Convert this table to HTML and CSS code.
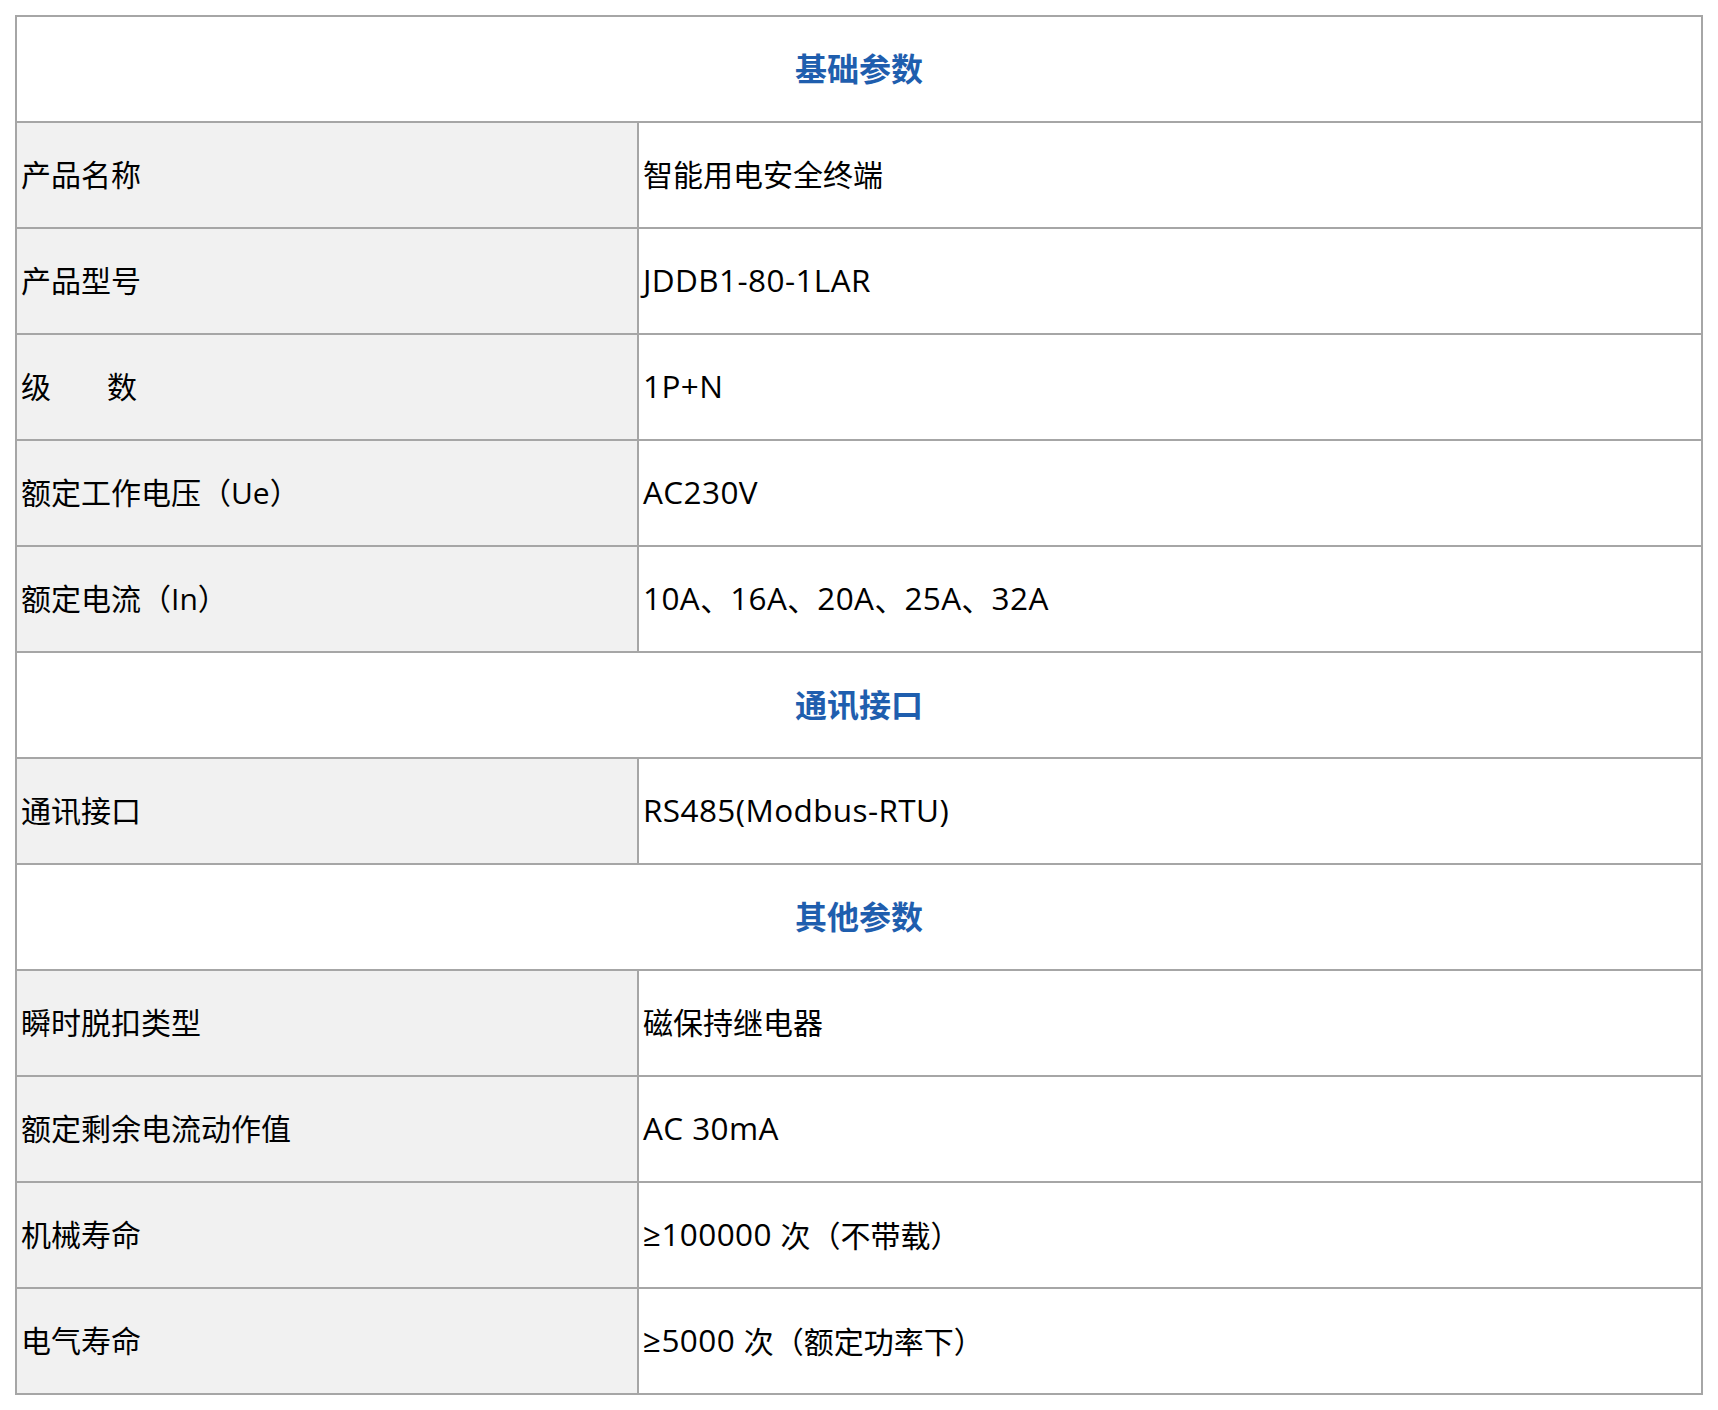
FILE: index.html
```html
<!DOCTYPE html>
<html lang="zh-CN">
<head>
<meta charset="utf-8">
<title>智能用电安全终端 参数</title>
<link rel="stylesheet" href="styles.css">
</head>
<body>
<table class="spec">
  <colgroup><col class="c-label"><col class="c-value"></colgroup>
  <tbody>
    <tr class="sec"><td colspan="2">基础参数</td></tr>
    <tr><td class="lbl">产品名称</td><td class="val">智能用电安全终端</td></tr>
    <tr><td class="lbl">产品型号</td><td class="val"><span class="lat">JDDB1-80-1LAR</span></td></tr>
    <tr><td class="lbl">级<span class="gap">　　</span>数</td><td class="val"><span class="lat">1P+N</span></td></tr>
    <tr><td class="lbl">额定工作电压（Ue）</td><td class="val"><span class="lat">AC230V</span></td></tr>
    <tr><td class="lbl">额定电流（In）</td><td class="val"><span class="lat">10A</span>、<span class="lat">16A</span>、<span class="lat">20A</span>、<span class="lat">25A</span>、<span class="lat">32A</span></td></tr>
    <tr class="sec"><td colspan="2">通讯接口</td></tr>
    <tr><td class="lbl">通讯接口</td><td class="val"><span class="lat">RS485(Modbus-RTU)</span></td></tr>
    <tr class="sec"><td colspan="2">其他参数</td></tr>
    <tr><td class="lbl">瞬时脱扣类型</td><td class="val">磁保持继电器</td></tr>
    <tr><td class="lbl">额定剩余电流动作值</td><td class="val"><span class="lat">AC 30mA</span></td></tr>
    <tr><td class="lbl">机械寿命</td><td class="val"><span class="lat">≥100000 </span>次（不带载）</td></tr>
    <tr><td class="lbl">电气寿命</td><td class="val"><span class="lat">≥5000 </span>次（额定功率下）</td></tr>
  </tbody>
</table>
</body>
</html>
```
FILE: styles.css
```css
html, body {
  margin: 0;
  padding: 0;
  background: #ffffff;
}
body {
  padding: 15px;
  font-family: "Open Sans", "Noto Sans CJK SC", sans-serif;
  color: #000000;
}
.spec {
  border-collapse: collapse;
  width: 1688px;
  table-layout: fixed;
}
.c-label { width: 622px; }
.spec td {
  border: 2px solid #a6a6a6;
  height: 106px;
  padding: 0 4px;
  font-size: 30px;
  line-height: 40px;
  vertical-align: middle;
  white-space: nowrap;
  box-sizing: border-box;
}
.spec .lbl {
  background: #f1f1f1;
}
.spec .val {
  background: #ffffff;
}
.gap {
  letter-spacing: -2px;
}
.lat {
  font-size: 31.5px;
  letter-spacing: 0.4px;
  vertical-align: 1px;
}
.spec .sec td {
  text-align: center;
  color: #1f5eae;
  font-weight: bold;
  font-size: 32px;
  padding-bottom: 5px;
  font-family: "Noto Sans CJK SC", sans-serif;
}
```
